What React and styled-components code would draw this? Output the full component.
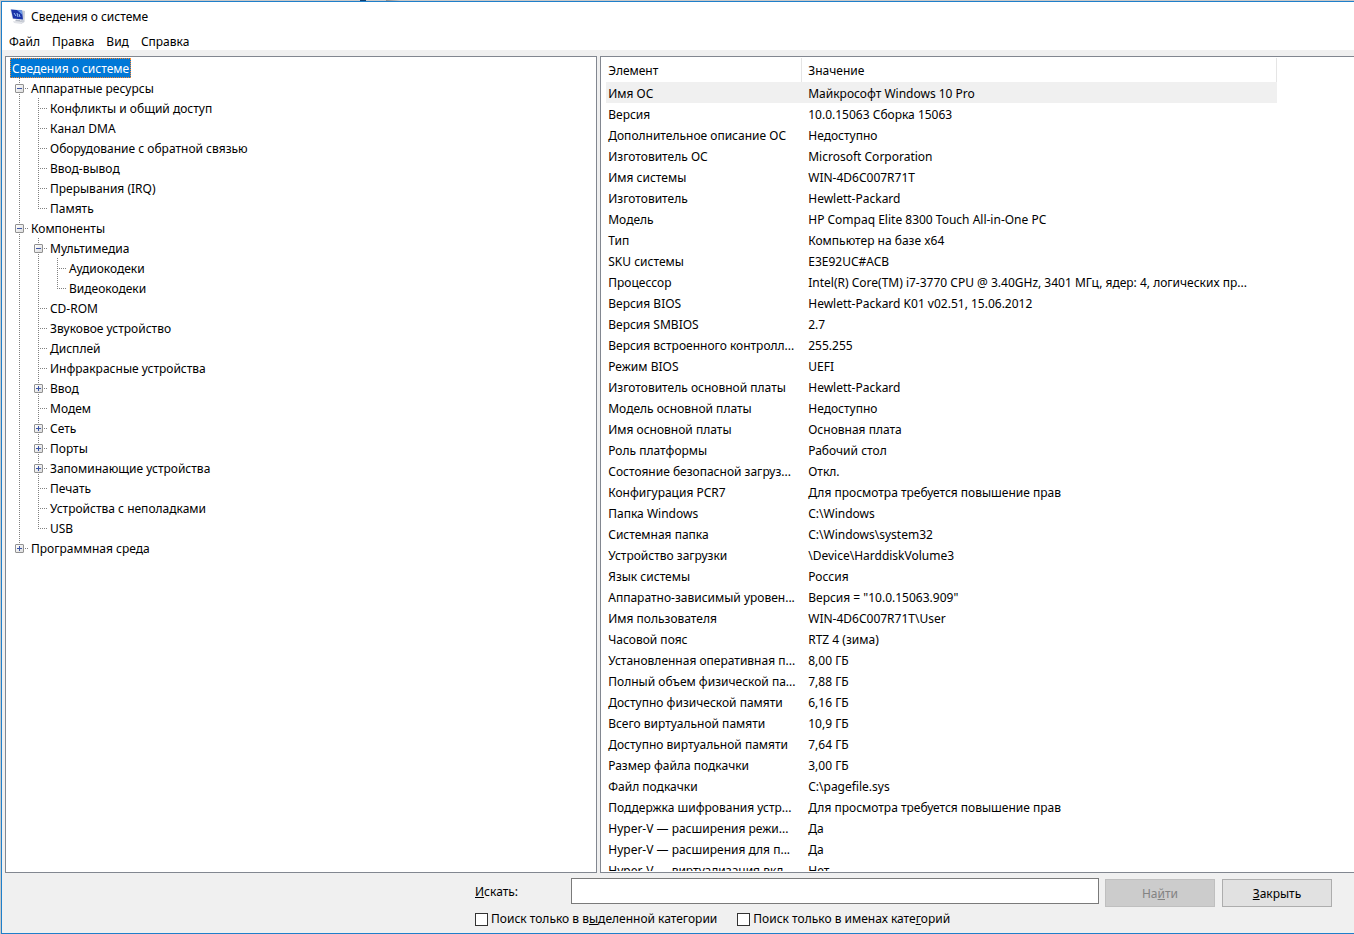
import React, { useState } from 'react';
import styled, { createGlobalStyle } from 'styled-components';

const GlobalStyle = createGlobalStyle`
  * { box-sizing: border-box; }
  body {
    margin: 0;
    background: #c9c9c9;
    color: #000;
    font-family: "Noto Sans", "Open Sans", sans-serif;
    font-size: 12px;
  }
  button, input { font: inherit; color: inherit; }
`;

const Desktop = styled.div`
  height: 100vh;
  padding: 1px 0 0 1px;
  background: linear-gradient(90deg, #c9c9c9 360px, #0f3f70 360px 366px, #c9c9c9 366px 386px, #8a8a8a 386px, #c9c9c9 400px);
`;

const Window = styled.div`
  display: flex;
  flex-direction: column;
  height: 100%;
  background: #f0f0f0;
  border: 1px solid #1f7fca;
  border-right: 0;
`;

const TitleBar = styled.header`
  display: flex;
  align-items: center;
  gap: 5px;
  height: 30px;
  padding-left: 8px;
  background: #fff;
`;

const Title = styled.h1`
  margin: 0;
  font-size: 12px;
  font-weight: 400;
  line-height: 16px;
`;

const MenuBar = styled.nav`
  display: flex;
  gap: 12px;
  height: 18px;
  padding-left: 7px;
  background: #fff;
`;

const MenuButton = styled.button`
  padding: 0;
  border: 0;
  background: none;
  line-height: 20px;
`;

const Panes = styled.main`
  flex: 1;
  min-height: 0;
  display: grid;
  grid-template-columns: 44fr 56fr;
  gap: 3px;
  padding: 6px 0 0 3px;
`;

const Pane = styled.section`
  min-width: 0;
  min-height: 0;
  background: #fff;
  border: 1px solid #828790;
`;

const TreePane = styled(Pane)`
  padding: 1px 4px;
  overflow: hidden;
`;

const ListPane = styled(Pane)`
  display: flex;
  padding: 1px 0 1px 5px;
  border-right: 0;
`;

const Scroller = styled.div`
  flex: 1;
  overflow: hidden;
`;

const Branch = styled.ul`
  margin: 0;
  padding: 0;
  list-style: none;
`;

const TreeRow = styled.div`
  display: flex;
  height: 20px;
`;

const dots = dir => `repeating-linear-gradient(${dir}, #808080 0 1px, transparent 1px 2px)`;

// one 19px column of the tree, with the dotted connector lines behind it
const Guide = styled.span`
  display: flex;
  align-items: center;
  width: 19px;
  height: 20px;
  padding: 1px 0 0 5px;
  background-repeat: no-repeat;
  background-image: ${p => (p.$line ? dots('to bottom') : 'none')}, ${p => (p.$arm ? dots('to right') : 'none')};
  background-position: 9px 0, 9px 10px;
  background-size: 1px ${p => (p.$line === 'half' ? '11px' : '20px')}, 9px 1px;
`;

const Expander = styled.button`
  display: flex;
  width: 9px;
  height: 9px;
  padding: 0;
  border: 1px solid #919191;
  border-radius: 1px;
  background: linear-gradient(135deg, #fff, #dcdcdc);
`;

const Label = styled.span`
  padding: 0 2px;
  line-height: 21px;
  white-space: nowrap;
`;

const Selected = styled(Label)`
  padding: 0 1px;
  border: 1px dotted #ff8728;
  background: #0078d7;
  color: #fff;
  line-height: 19px;
`;

const Table = styled.table`
  width: 671px;
  table-layout: fixed;
  border-collapse: separate;
  border-spacing: 0;
`;

const Head = styled.th`
  width: ${p => p.$width};
  height: 24px;
  padding: 2px 0 0 ${p => p.$pad};
  border-right: 1px solid #e5e5e5;
  font-weight: 400;
  line-height: 20px;
  text-align: left;
`;

const Row = styled.tr`
  background: ${p => (p.$active ? '#f0f0f0' : 'transparent')};
`;

const Cell = styled.td`
  height: 21px;
  padding: 2px 2px 0 ${p => p.$pad};
  overflow: hidden;
  line-height: 19px;
  text-overflow: ellipsis;
  white-space: nowrap;
`;

const Footer = styled.form`
  display: grid;
  align-content: start;
  gap: 4px;
  height: 60px;
  padding: 5px 22px 0 473px;
`;

const SearchRow = styled.div`
  display: flex;
  height: 29px;
`;

const SearchLabel = styled.label`
  width: 96px;
  line-height: 28px;
`;

const SearchInput = styled.input`
  flex: 1;
  min-width: 0;
  height: 26px;
  padding: 0 4px;
  border: 1px solid #7a7a7a;
  background: #fff;
`;

const PushButton = styled.button`
  width: 110px;
  height: 28px;
  margin: 1px 0 0 6px;
  padding: 0;
  border: 1px solid #adadad;
  background: #e1e1e1;

  & + & { margin-left: 7px; }

  &:disabled {
    border-color: #bfbfbf;
    background: #ccc;
    color: #838383;
  }
`;

const Options = styled.div`
  display: flex;
  gap: 20px;
  height: 16px;
`;

const Option = styled.label`
  display: flex;
  align-items: center;
  gap: 3px;
  line-height: 16px;
  white-space: nowrap;
`;

const Check = styled.input`
  appearance: none;
  width: 13px;
  height: 13px;
  margin: 0;
  border: 1px solid #333;
  background: #fff;

  &:checked { background: #0078d7; }
`;

const tree = [
  { name: 'Аппаратные ресурсы', open: true, items: [
    { name: 'Конфликты и общий доступ' },
    { name: 'Канал DMA' },
    { name: 'Оборудование с обратной связью' },
    { name: 'Ввод-вывод' },
    { name: 'Прерывания (IRQ)' },
    { name: 'Память' },
  ] },
  { name: 'Компоненты', open: true, items: [
    { name: 'Мультимедиа', open: true, items: [
      { name: 'Аудиокодеки' },
      { name: 'Видеокодеки' },
    ] },
    { name: 'CD-ROM' },
    { name: 'Звуковое устройство' },
    { name: 'Дисплей' },
    { name: 'Инфракрасные устройства' },
    { name: 'Ввод', items: [] },
    { name: 'Модем' },
    { name: 'Сеть', items: [] },
    { name: 'Порты', items: [] },
    { name: 'Запоминающие устройства', items: [] },
    { name: 'Печать' },
    { name: 'Устройства с неполадками' },
    { name: 'USB' },
  ] },
  { name: 'Программная среда', items: [] },
];

const rows = [
  ['Имя ОС', 'Майкрософт Windows 10 Pro'],
  ['Версия', '10.0.15063 Сборка 15063'],
  ['Дополнительное описание ОС', 'Недоступно'],
  ['Изготовитель ОС', 'Microsoft Corporation'],
  ['Имя системы', 'WIN-4D6C007R71T'],
  ['Изготовитель', 'Hewlett-Packard'],
  ['Модель', 'HP Compaq Elite 8300 Touch All-in-One PC'],
  ['Тип', 'Компьютер на базе x64'],
  ['SKU системы', 'E3E92UC#ACB'],
  ['Процессор', 'Intel(R) Core(TM) i7-3770 CPU @ 3.40GHz, 3401 МГц, ядер: 4, логических пр...'],
  ['Версия BIOS', 'Hewlett-Packard K01 v02.51, 15.06.2012'],
  ['Версия SMBIOS', '2.7'],
  ['Версия встроенного контролл...', '255.255'],
  ['Режим BIOS', 'UEFI'],
  ['Изготовитель основной платы', 'Hewlett-Packard'],
  ['Модель основной платы', 'Недоступно'],
  ['Имя основной платы', 'Основная плата'],
  ['Роль платформы', 'Рабочий стол'],
  ['Состояние безопасной загруз...', 'Откл.'],
  ['Конфигурация PCR7', 'Для просмотра требуется повышение прав'],
  ['Папка Windows', 'C:\\Windows'],
  ['Системная папка', 'C:\\Windows\\system32'],
  ['Устройство загрузки', '\\Device\\HarddiskVolume3'],
  ['Язык системы', 'Россия'],
  ['Аппаратно-зависимый уровен...', 'Версия = "10.0.15063.909"'],
  ['Имя пользователя', 'WIN-4D6C007R71T\\User'],
  ['Часовой пояс', 'RTZ 4 (зима)'],
  ['Установленная оперативная п...', '8,00 ГБ'],
  ['Полный объем физической па...', '7,88 ГБ'],
  ['Доступно физической памяти', '6,16 ГБ'],
  ['Всего виртуальной памяти', '10,9 ГБ'],
  ['Доступно виртуальной памяти', '7,64 ГБ'],
  ['Размер файла подкачки', '3,00 ГБ'],
  ['Файл подкачки', 'C:\\pagefile.sys'],
  ['Поддержка шифрования устр...', 'Для просмотра требуется повышение прав'],
  ['Hyper-V — расширения режи...', 'Да'],
  ['Hyper-V — расширения для п...', 'Да'],
  ['Hyper-V — виртуализация вкл...', 'Нет'],
];

const AppIcon = () => (
  <svg width="16" height="16" viewBox="0 0 16 16" aria-hidden="true">
    <path d="M11 1 L15 2 L14.500 13 L11 15 Z" fill="#c9cdd6" />
    <path d="M0 0 L12 1 L13.500 11 L2.500 10 Z" fill="#dfe5ee" />
    <path d="M1 .5 L12 1.500 L13 10.500 L3 9.500 Z" fill="#1c35a8" />
    <path d="M7 1 L12 1.500 L12.500 6 Z" fill="#6f9be6" />
    <path d="M4 4 L6 7 M7 4 L8 8 M9 5 L10 8" stroke="#9dc0f5" fill="none" />
    <path d="M6 10.500 L10 11 L12 13 L5 12.500 Z" fill="#b3b8c2" />
    <path d="M3 12 L13 13 L11 15 L4 14 Z" fill="#e2e4e9" />
  </svg>
);

const TreeNode = ({ node, trail, last }) => {
  const [open, setOpen] = useState(!!node.open);

  return (
    <li>
      <TreeRow>
        {trail.map((on, i) => <Guide key={i} $line={on ? 'full' : ''} />)}
        <Guide $line={last ? 'half' : 'full'} $arm>
          {node.items && (
            <Expander type="button" aria-label={node.name} aria-expanded={open} onClick={() => setOpen(!open)}>
              <svg width="7" height="7" viewBox="0 0 7 7">
                <path d={open ? 'M1 3.500h5' : 'M1 3.500h5M3.500 1v5'} stroke="#3c55a5" />
              </svg>
            </Expander>
          )}
        </Guide>
        <Label>{node.name}</Label>
      </TreeRow>
      {open && <TreeList items={node.items} trail={[...trail, !last]} />}
    </li>
  );
};

const TreeList = ({ items, trail }) => (
  <Branch>
    {items.map((node, i) => (
      <TreeNode key={node.name} node={node} trail={trail} last={i === items.length - 1} />
    ))}
  </Branch>
);

const App = () => {
  const [search, setSearch] = useState('');

  return (
    <>
      <GlobalStyle />
      <Desktop>
        <Window>
          <TitleBar>
            <AppIcon />
            <Title>Сведения о системе</Title>
          </TitleBar>
          <MenuBar>
            {['Файл', 'Правка', 'Вид', 'Справка'].map(m => <MenuButton key={m} type="button">{m}</MenuButton>)}
          </MenuBar>
          <Panes>
            <TreePane>
              <TreeRow><Selected>Сведения о системе</Selected></TreeRow>
              <TreeList items={tree} trail={[]} />
            </TreePane>
            <ListPane>
              <Scroller>
                <Table>
                  <thead>
                    <tr>
                      <Head $width="196px" $pad="2px">Элемент</Head>
                      <Head $width="475px" $pad="6px">Значение</Head>
                    </tr>
                  </thead>
                  <tbody>
                    {rows.map(([name, value], i) => (
                      <Row key={name} $active={i === 0}>
                        <Cell $pad="2px">{name}</Cell>
                        <Cell $pad="6px">{value}</Cell>
                      </Row>
                    ))}
                  </tbody>
                </Table>
              </Scroller>
            </ListPane>
          </Panes>
          <Footer onSubmit={e => e.preventDefault()}>
            <SearchRow>
              <SearchLabel htmlFor="search"><u>И</u>скать:</SearchLabel>
              <SearchInput id="search" type="text" value={search} onChange={e => setSearch(e.target.value)} />
              <PushButton type="submit" disabled={!search}>На<u>й</u>ти</PushButton>
              <PushButton type="button"><u>З</u>акрыть</PushButton>
            </SearchRow>
            <Options>
              <Option><Check type="checkbox" /><span>Поиск только в в<u>ы</u>деленной категории</span></Option>
              <Option><Check type="checkbox" /><span>Поиск только в именах кате<u>г</u>орий</span></Option>
            </Options>
          </Footer>
        </Window>
      </Desktop>
    </>
  );
};

export default App;
